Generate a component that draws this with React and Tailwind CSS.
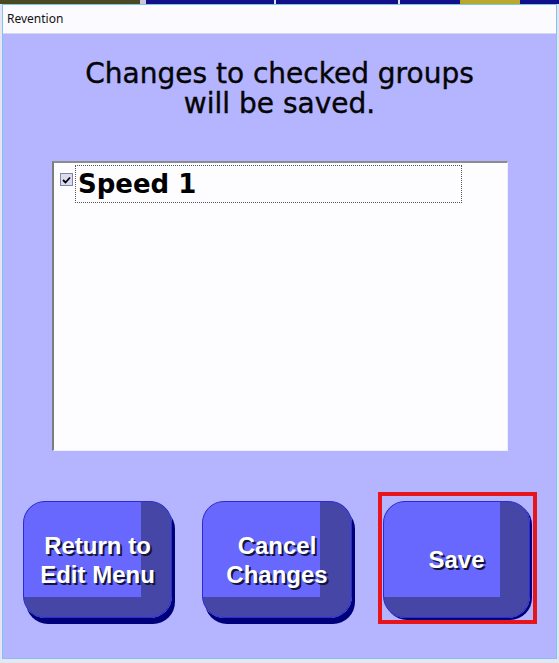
import React from "react";

function Btn({ lines, face = "w-[150px]", light = "w-[117px]", shadow = "shadow-[3px_6px_0_#00007a]", ml = "" }) {
  return (
    <div className={`relative h-[117px] ${face} ${ml} shrink-0 rounded-[22px] ${shadow}`}>
      <div className="absolute inset-0 overflow-hidden rounded-[22px] border border-[#2a2ad8] bg-[#4646a6]">
        <div className={`h-[95px] ${light} bg-[#6868ff]`} />
      </div>
      <div className="absolute inset-0 flex flex-col items-center justify-center text-[24px] font-bold leading-[29px] text-white [text-shadow:2px_2px_0_#15153a] [font-family:'Liberation_Sans',Arial,sans-serif]">
        {lines.map((l) => (
          <span key={l}>{l}</span>
        ))}
      </div>
    </div>
  );
}

export default function App() {
  return (
    <div className="relative h-[663px] w-[559px] overflow-hidden bg-[#e4e6f4] [font-family:'Liberation_Sans',Arial,sans-serif]">
      <div className="flex h-[4px]">
        <div className="w-[140px] bg-[#4a4a22]" />
        <div className="w-[6px] bg-[#c8c8d8]" />
        <div className="w-[128px] bg-[#10108a]" />
        <div className="w-[2px] bg-[#e0e0ff]" />
        <div className="w-[122px] bg-[#10108a]" />
        <div className="w-[2px] bg-[#e0e0ff]" />
        <div className="w-[60px] bg-[#10108a]" />
        <div className="w-[60px] bg-[#b8a830]" />
        <div className="flex-1 bg-[#10108a]" />
      </div>
      <div className="ml-[2px] flex h-[655px] w-[555px] flex-col border border-[#80c4ee]">
        <div className="flex h-[29px] items-center border-b border-[#d6d6ee] bg-[#fbfbff] pl-[4px] text-[12px] text-[#111] [font-family:'Noto_Sans',sans-serif]">
          Revention
        </div>
        <div className="flex flex-1 flex-col bg-[#b4b4ff]">
          <div className="pt-[25px] text-center text-[28px] leading-[30px] text-[#050505] [-webkit-text-stroke:0.4px_#050505] [font-family:'DejaVu_Sans',sans-serif]">
            <div>Changes to checked groups</div>
            <div>will be saved.</div>
          </div>
          <div className="ml-[49px] mt-[42px] h-[290px] w-[456px] border-l-2 border-t-2 border-b border-r border-l-[#7c7c7c] border-t-[#8c8c8c] border-b-[#eeeeff] border-r-[#eeeeff] bg-[#fdfdff] pt-[2px]">
            <div className="flex items-start">
              <div className="ml-[6px] mt-[8px] flex h-[13px] w-[13px] items-center justify-center border border-[#8484a8] bg-[#dcdcf0]">
                <svg width="9" height="8" viewBox="0 0 9 8">
                  <path d="M1 4 L3.5 6.5 L8 1.5" fill="none" stroke="#000" strokeWidth="1.8" />
                </svg>
              </div>
              <div className="ml-[2px] flex h-[38px] w-[387px] items-center border border-dotted border-[#555] pl-[2px] text-[26px] font-bold text-black [font-family:'DejaVu_Sans',sans-serif]">
                Speed 1
              </div>
            </div>
          </div>
          <div className="mt-[50px] flex">
            <Btn lines={["Return to", "Edit Menu"]} face="w-[149px]" ml="ml-[20px]" />
            <Btn lines={["Cancel", "Changes"]} ml="ml-[30px]" />
            <Btn lines={["Save"]} face="w-[147px]" light="w-[116px]" shadow="shadow-[2px_2px_0_#00007a]" ml="ml-[31px]" />
          </div>
        </div>
      </div>
      <div className="pointer-events-none absolute left-[378px] top-[492px] h-[132px] w-[159px] border-4 border-[#e8141c]" />
    </div>
  );
}
